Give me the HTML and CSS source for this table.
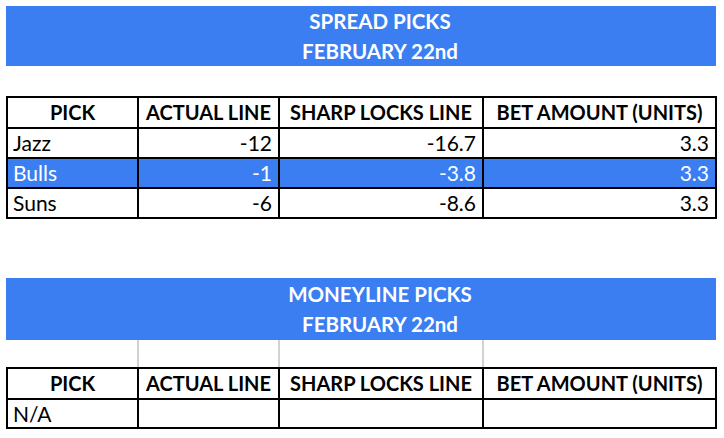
FILE: index.html
```html
<!DOCTYPE html>
<html>
<head>
<meta charset="utf-8">
<link rel="stylesheet" href="styles.css">
</head>
<body>
<div class="page">
  <section class="block">
    <div class="title">SPREAD PICKS<br>FEBRUARY 22nd</div>
    <div class="sheet sheet-spread">
      <div class="cell head">PICK</div>
      <div class="cell head">ACTUAL LINE</div>
      <div class="cell head">SHARP LOCKS LINE</div>
      <div class="cell head">BET AMOUNT (UNITS)</div>

      <div class="cell name">Jazz</div>
      <div class="cell num">-12</div>
      <div class="cell num">-16.7</div>
      <div class="cell num">3.3</div>

      <div class="cell name hl">Bulls</div>
      <div class="cell num hl">-1</div>
      <div class="cell num hl">-3.8</div>
      <div class="cell num hl">3.3</div>

      <div class="cell name">Suns</div>
      <div class="cell num">-6</div>
      <div class="cell num">-8.6</div>
      <div class="cell num">3.3</div>
    </div>
  </section>

  <section class="block block-money">
    <div class="title title-money">MONEYLINE PICKS<br>FEBRUARY 22nd</div>
    <div class="strip">
      <span></span><span></span><span></span><span></span>
    </div>
    <div class="sheet sheet-money">
      <div class="cell head">PICK</div>
      <div class="cell head">ACTUAL LINE</div>
      <div class="cell head">SHARP LOCKS LINE</div>
      <div class="cell head">BET AMOUNT (UNITS)</div>

      <div class="cell name">N/A</div>
      <div class="cell num"></div>
      <div class="cell num"></div>
      <div class="cell num"></div>
    </div>
  </section>
</div>
</body>
</html>
```

FILE: styles.css
```css
* {
  box-sizing: border-box;
}

html, body {
  margin: 0;
  padding: 0;
  background: #ffffff;
}

body {
  font-family: Lato, "Open Sans", "Liberation Sans", sans-serif;
  color: #000000;
}

.page {
  padding: 6px 0 0 6px;
  width: 724px;
}

.block {
  display: flex;
  flex-direction: column;
  width: 711px;
}

.block-money {
  margin-top: 59px;
}

.title {
  width: 710px;
  height: 60px;
  background: #3a7ef2;
  color: #ffffff;
  font-weight: 700;
  font-size: 20.5px;
  line-height: 30px;
  text-align: center;
  padding-left: 38px;
}

.title-money {
  height: 62px;
  padding-top: 1px;
}

.sheet {
  display: grid;
  grid-template-columns: 129px 139px 202px 231px;
  gap: 2px;
  padding: 2px;
  background: #000000;
}

.sheet-spread {
  margin-top: 30px;
  grid-template-rows: 29px 28px 28px 28px;
}

.sheet-money {
  grid-template-rows: 29px 27px;
}

.cell {
  background: #ffffff;
  font-size: 21px;
  white-space: nowrap;
  overflow: hidden;
}

.head {
  font-size: 20px;
  font-weight: 700;
  text-align: center;
  line-height: 29px;
}

.name {
  text-align: left;
  padding-left: 5px;
  line-height: 28px;
}

.num {
  text-align: right;
  padding-right: 6px;
  line-height: 28px;
}

.sheet-money .name,
.sheet-money .num {
  line-height: 27px;
}

.hl {
  background: #3a7ef2;
  color: #ffffff;
}

.strip {
  display: grid;
  grid-template-columns: 129px 139px 202px 231px;
  gap: 2px;
  margin: 0 2px;
  height: 27px;
  background: #d2d2d2;
}

.strip span {
  background: #ffffff;
}
```
